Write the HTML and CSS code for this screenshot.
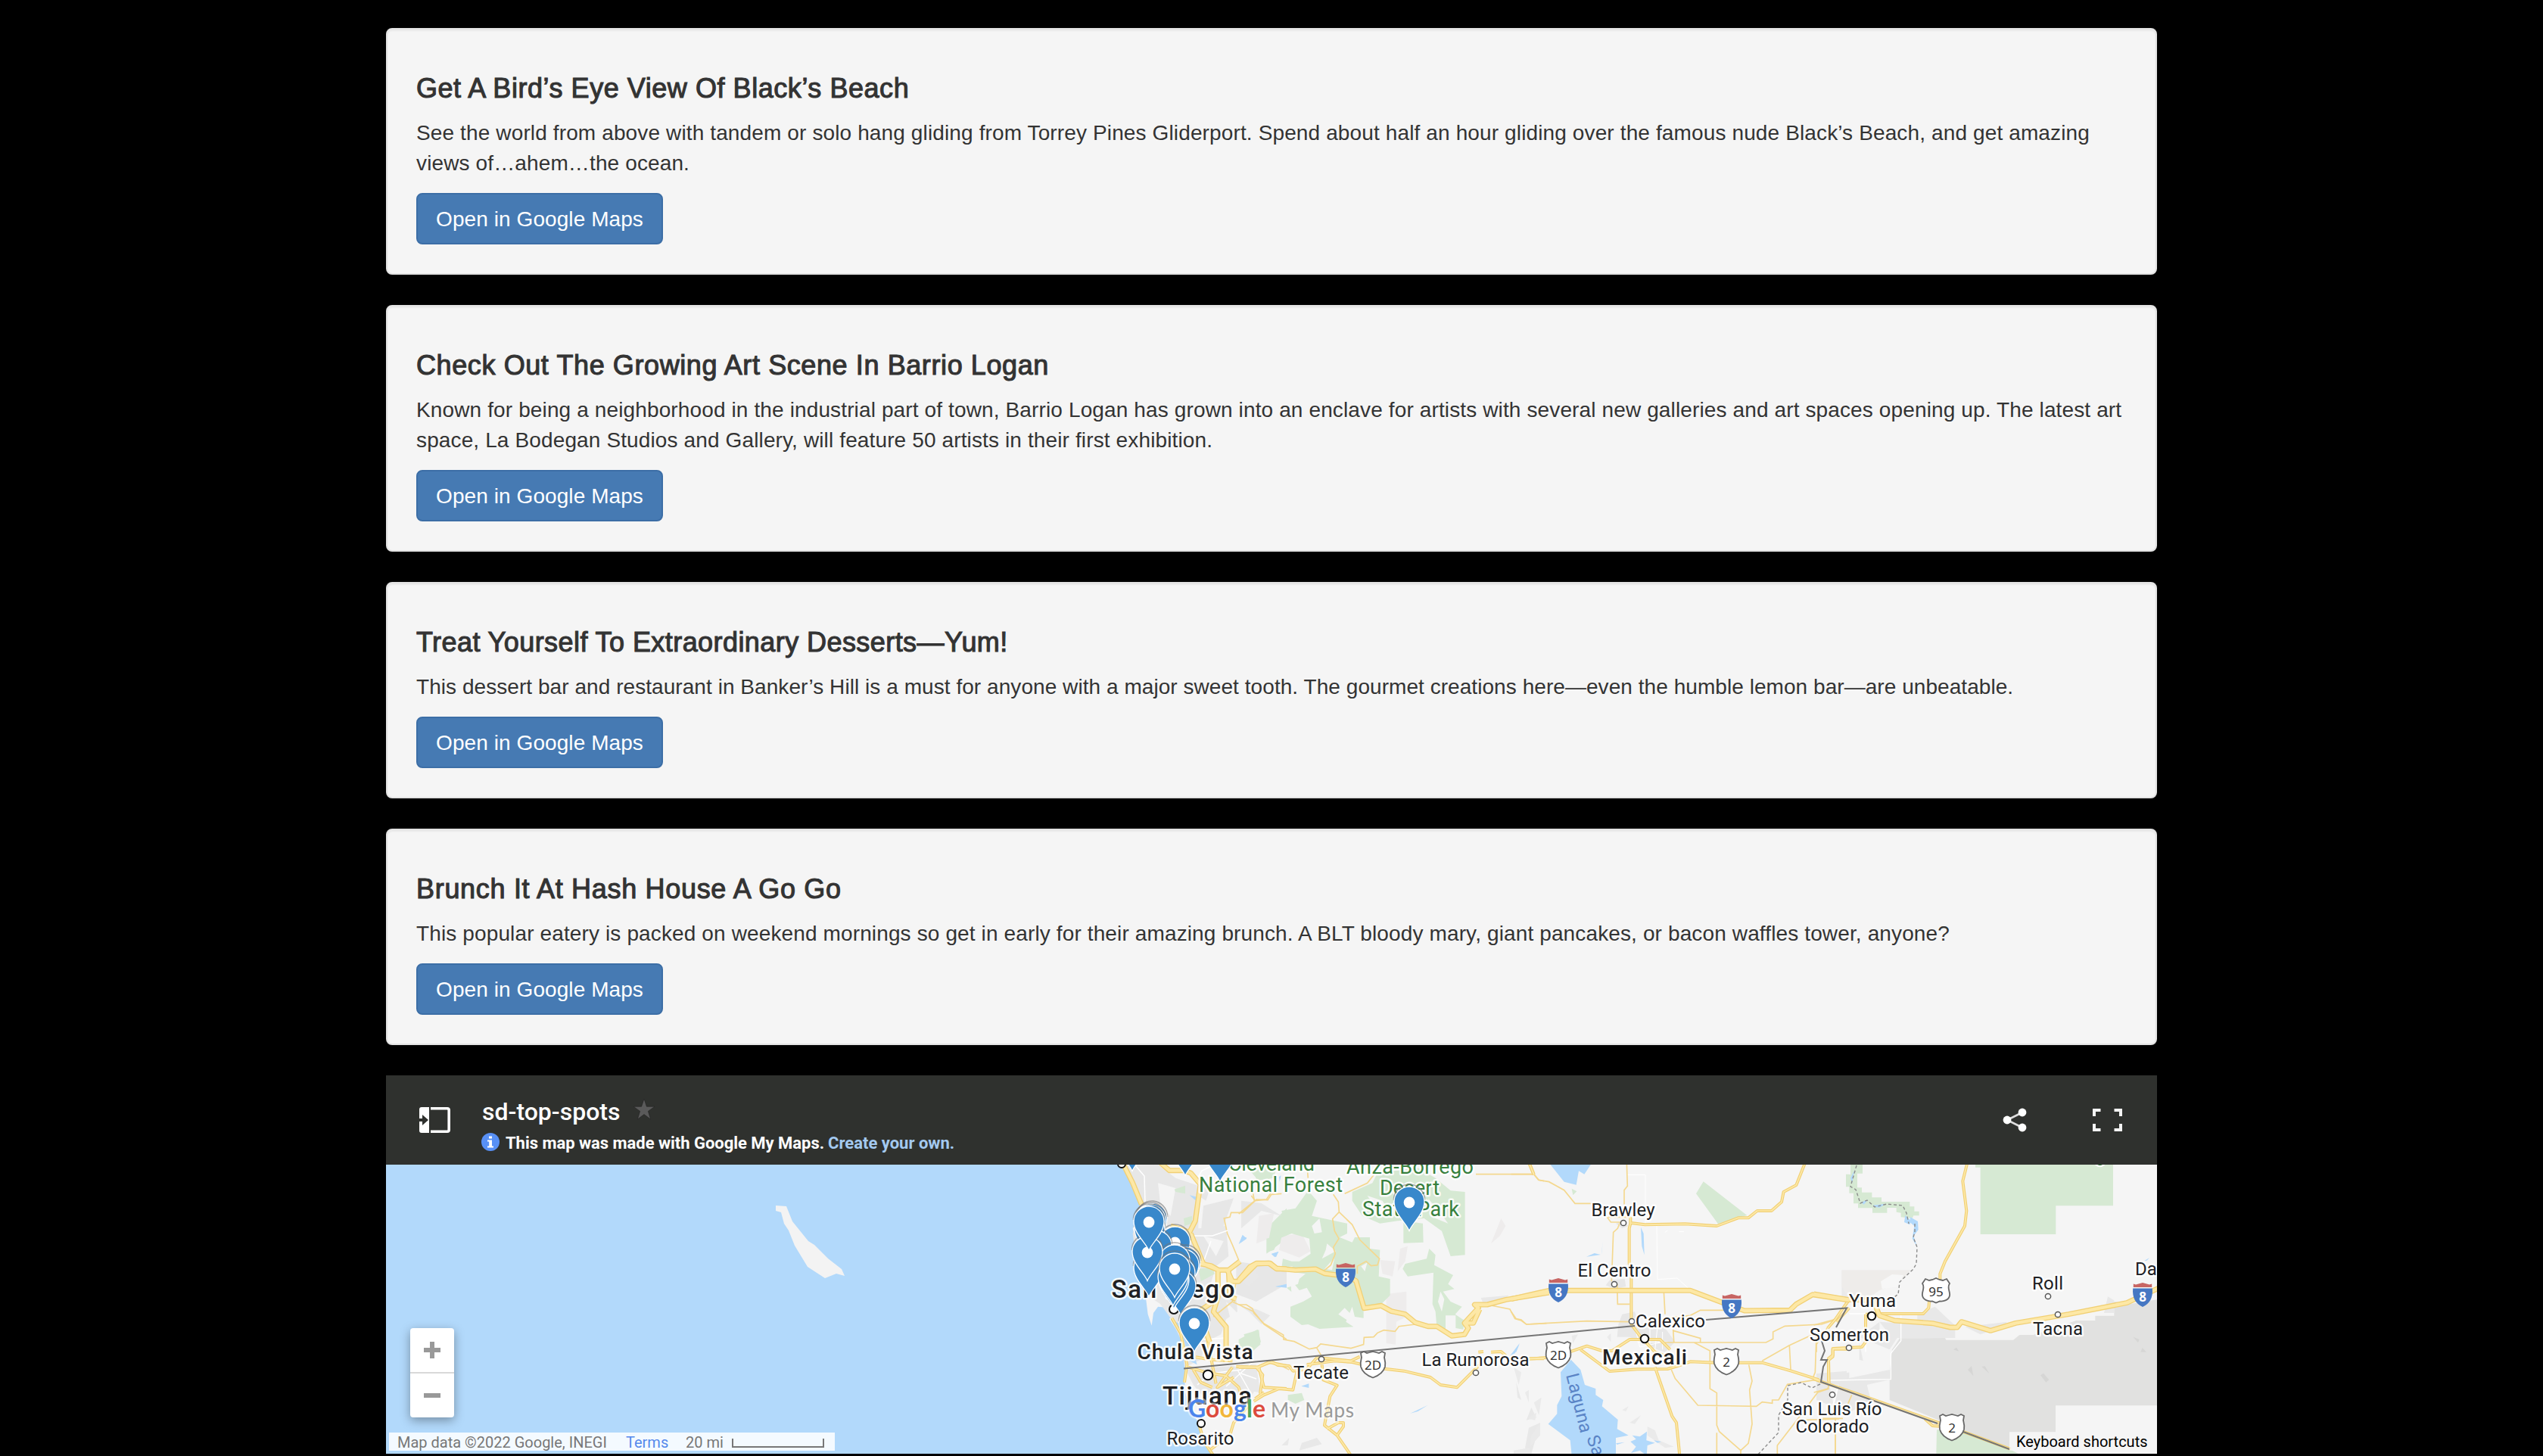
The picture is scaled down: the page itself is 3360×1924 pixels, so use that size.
FILE: index.html
```html
<!DOCTYPE html>
<html lang="en">
<head>
<meta charset="utf-8">
<title>San Diego Top Spots</title>
<link rel="stylesheet" href="styles.css">
</head>
<body>
<main class="container">
  <article class="well">
    <h4 class="well-title t1">Get A Bird’s Eye View Of Black’s Beach</h4>
    <p class="well-text d1">See the world from above with tandem or solo hang gliding from Torrey Pines Gliderport. Spend about half an hour gliding over the famous nude Black’s Beach, and get amazing<br>views of…ahem…the ocean.</p>
    <a class="btn">Open in Google Maps</a>
  </article>
  <article class="well">
    <h4 class="well-title t2">Check Out The Growing Art Scene In Barrio Logan</h4>
    <p class="well-text d2">Known for being a neighborhood in the industrial part of town, Barrio Logan has grown into an enclave for artists with several new galleries and art spaces opening up. The latest art<br>space, La Bodegan Studios and Gallery, will feature 50 artists in their first exhibition.</p>
    <a class="btn">Open in Google Maps</a>
  </article>
  <article class="well">
    <h4 class="well-title t3">Treat Yourself To Extraordinary Desserts—Yum!</h4>
    <p class="well-text d3">This dessert bar and restaurant in Banker’s Hill is a must for anyone with a major sweet tooth. The gourmet creations here—even the humble lemon bar—are unbeatable.</p>
    <a class="btn">Open in Google Maps</a>
  </article>
  <article class="well">
    <h4 class="well-title t4">Brunch It At Hash House A Go Go</h4>
    <p class="well-text d4">This popular eatery is packed on weekend mornings so get in early for their amazing brunch. A BLT bloody mary, giant pancakes, or bacon waffles tower, anyone?</p>
    <a class="btn">Open in Google Maps</a>
  </article>

  <section class="mymap">
    <header class="map-header">
      <svg class="icon-panel" width="42" height="34" viewBox="0 0 42 34">
        <path fill="#fff" d="M3 0H13V34H3Q0 34 0 31V19H4V24L12 17L4 10V15H0V3Q0 0 3 0Z"/>
        <path fill="none" stroke="#fff" stroke-width="3.6" d="M15 1.8H37Q39.2 1.8 39.2 4V30Q39.2 32.2 37 32.2H15"/>
      </svg>
      <div class="map-heading">
        <div class="map-title-row">
          <span class="map-title">sd-top-spots</span>
          <svg class="icon-star" width="30" height="30" viewBox="0 0 30 30"><path fill="#5a5a5a" stroke="#222" stroke-width=".6" d="M15 1L18.4 11.2H29L20.4 17.4L23.6 28L15 21.6L6.4 28L9.6 17.4L1 11.2H11.6Z"/></svg>
        </div>
        <div class="map-sub">
          <svg width="24" height="24" viewBox="0 0 24 24"><circle cx="12" cy="12" r="12" fill="#5890f5"/><path fill="#fff" d="M10 4.5H14V7.5H10ZM8 9.5H14V17.500H16V19.500H8V17.500H10.200V11.500H8Z"/></svg>
          <span class="made">This map was made with Google My Maps.</span>
          <span class="create">Create your own.</span>
        </div>
      </div>
      <svg class="icon-share" width="32" height="32" viewBox="0 0 32 32" fill="#fff"><path d="M26 6L6 16L26 26" fill="none" stroke="#ddd" stroke-width="2.600"/><circle cx="6" cy="16" r="5.400"/><circle cx="26" cy="6" r="5.400"/><circle cx="26" cy="26" r="5.400"/></svg>
      <svg class="icon-full" width="39" height="30" viewBox="0 0 39 30"><path fill="none" stroke="#f4f4f4" stroke-width="4" d="M10.500 2H2V10M28.500 2H37V10M2 20V28H10.500M37 20V28H28.500"/></svg>
    </header>

    <div class="map-view">
      <svg class="map" width="2340" height="382" viewBox="510 1539 2340 382">
        <defs>
          <g id="freeways">
            <g transform="translate(1300 1520) scale(.33333)">
              <path d="M700 50L735 80H790L820 90L858 135L838 280L815 325L740 300M820 330L870 450L930 475H970L1015 440M860 450L900 458L930 475H965L985 520H1010L1080 450L1130 448L1160 470H1200M928 480V580L910 640L960 700V840M970 480L975 580L1000 590M925 590L850 640L870 690L895 760M550 50L590 130L625 215"/>
            </g>
            <g transform="translate(1640 1520) scale(.33333)">
              <path d="M-10 515L35 462L60 448H115L140 468L215 475L295 471L330 488L375 494L410 490L455 518L487 626L555 616L595 638L650 650L690 683L740 698H775L835 736L885 730L900 705L885 685L940 625L925 612H975L1050 592L1220 564M885 685H920L945 630"/>
            </g>
            <g transform="translate(2000 1520) scale(.33333)">
              <path d="M-10 590L140 556H700L825 603L915 636L1095 634L1120 610L1185 572L1330 594"/>
            </g>
            <g transform="translate(2400 1400) scale(.33333)">
              <path d="M-10 930L125 952L225 955L250 1015L310 1035L460 1046L530 1062H558L575 1040L690 1075L790 1045L1000 1010L1230 965L1360 905"/>
            </g>
          </g>
          <g id="highways">
            <g transform="translate(1300 1520) scale(.33333)">
              <path d="M745 665L780 725L805 850L795 920M810 860L880 880L960 895L1010 940L1025 985M840 820L900 830L985 835M985 860L925 940L990 900M880 720L920 925M830 870L860 920L905 940M1000 858L1090 860L1110 940L1200 945M1090 858L1130 840L1200 855M1050 1010L990 1080L975 1130L900 1185M850 1080L875 1160L910 1210M1075 985L1110 960"/>
            </g>
            <g transform="translate(1640 1520) scale(.33333)">
              <path d="M-10 860H65L120 838L145 852L190 855L205 875L260 868L300 822L435 835L470 818M260 850L370 835L440 840L530 862L645 875L750 900L790 930L855 940L905 890L945 850M60 860L85 890L75 965M50 995L90 970L150 945L205 950L220 880M320 850L325 910L380 932L352 975L330 1090L380 1130L435 1210M340 1105L385 1080L405 1080V1095L380 1130M1140 50L1160 95M940 800L960 798M990 800L1030 798L1050 815M1140 826H1200"/>
            </g>
            <g transform="translate(2000 1520) scale(.33333)">
              <path d="M62 50L80 97M463 265V290L458 310V450L466 480V690L500 735L560 800L640 830M465 288L520 295L680 292L805 300L890 268H930L965 240H1022L1062 205L1070 165L1120 138L1155 50M60 827L130 822M220 800L290 776L350 795H390L460 750H580L620 790M265 790L380 876L490 868L610 867L650 855L700 838L800 842H985L1100 875L1210 910M560 860L628 1055L645 1080L658 1210M1330 625L1280 680M1330 788H1265V818L1248 832L1250 925"/>
            </g>
            <g transform="translate(2400 1400) scale(.33333)">
              <path d="M598 410L580 482L595 600L588 660L510 800L490 850V875M447 960L445 985L423 1008H250M195 1010H240M195 1010V1120L180 1140L65 1146V1172L48 1185V1275M-10 1267L160 1325M120 965L75 1030L45 1065M430 1425L460 1452L490 1454M160 1325L490 1442L770 1545"/>
            </g>
          </g>
          <g id="shield-i">
            <path fill="#4577c3" d="M-12.800 7.500H12.800C14 20 9 28 0 32C-9 28-14 20-12.800 7.500Z"/>
            <path fill="#c76563" d="M-12.200 6V1.500L-9 2.500L-4.500 1.300L0 0L4.500 1.300L9 2.500L12.200 1.500V6Z"/>
            <text class="shield-num inv" y="24.500">8</text>
          </g>
          <path id="shield-mx" class="shield" d="M-16 3L-12 1L-8 3L-4 2L0 1L4 2L8 3L12 1L16 3L15 9C16 13 17 16 16 21C14 28 7 33 0 35.500C-7 33-14 28-16 21C-17 16-16 13-15 9Z"/>
          <path id="shield-us" class="shield" d="M-14 1L-9 3L-4.500 2L0 0L4.500 2L9 3L14 1L18 7C14 13 19 17 18 23C17 29 10 31 5 30.500L0 32.500L-5 30.500C-10 31-17 29-18 23C-19 17-14 13-18 7Z"/>
          <g id="pin">
            <path fill="none" stroke="#777" stroke-opacity=".6" stroke-width="1.600" d="M-20.500-3A20.500 21 0 0 1 20.500-3"/>
            <path fill="#3888cb" stroke="#fff" stroke-width="1.300" d="M0 37.500C-4 27-20 15-20-1A20 20 0 0 1 20-1C20 15 4 27 0 37.500Z"/>
            <circle r="7.400" fill="#fff"/>
          </g>
        </defs>

        <rect x="510" y="1539" width="2340" height="382" fill="#b2d9fb"/>
        <path fill="#f3f3f3" d="M1025 1593L1039 1594L1047 1614L1068 1640L1076 1645L1094 1663L1112 1677L1116 1686L1105 1683L1090 1689L1067 1674L1050 1646L1042 1626L1036 1617L1032 1602L1025 1600Z"/>

        <!-- land -->
        <g transform="translate(1300 1520) scale(.33333)">
          <path fill="#f5f5f5" d="M540 50L585 120L605 175L622 235L590 310L610 400L600 480L640 570L650 650L665 695L672 645L690 620L740 625L760 650L735 668L775 730L790 790L800 860L795 950L820 1030L850 1080L862 1120L880 1170L905 1210H4700V50Z"/>
          <path fill="#e7e7e7" d="M560 60L690 57L760 110L850 140V310L960 300L970 420L920 460L890 560L1000 580L1005 640L960 670L940 730L880 760L860 830L795 860L785 760L740 665L700 610L640 570L610 480L590 330L625 240L600 160ZM870 220L990 190L950 300L860 330ZM800 870L990 855L1090 910L1060 980L920 950L880 990L830 930ZM1000 440L1200 470V530L1080 600L1000 570ZM850 100L900 140L880 200L850 180Z"/>
          <path fill="#f5f5f5" d="M690 130L760 150L740 260L700 220ZM870 340L950 360L920 420ZM960 600L1010 650L980 680Z"/>
          <path fill="#b2d9fb" d="M740 670L780 690L830 800L845 850L815 835L795 760ZM1025 335L1042 350L1010 372ZM1140 410L1168 402L1158 424ZM815 178L845 185L838 198ZM1155 540L1200 530V545Z"/>
          <path fill="#d6e9d3" d="M755 155L798 140V172L760 165ZM792 270L825 260V290L795 300ZM1130 300L1200 230V350L1120 410ZM1010 750L1085 710L1098 760L1060 805L1010 780ZM850 470L905 465L915 490L860 520ZM1070 60L1160 60L1150 110L1080 120Z"/>
        </g>
        <g transform="translate(1640 1520) scale(.33333)">
          <path fill="#eeecec" d="M160 340L240 330L275 400L230 425L150 395ZM70 260L130 250L110 350L60 370ZM550 435L610 440L600 500L560 490ZM575 570L655 560V660L615 680L612 770L575 765ZM990 370L1030 270L1048 300L1025 340ZM630 390L660 380L650 440L620 480Z"/>
          <path fill="#e8e8e8" d="M0 200L80 210L160 260L80 240L0 310ZM0 480L45 460L70 500L30 540L0 520ZM0 620L60 630L115 655L80 690L30 640ZM0 850H60L75 960L0 950ZM950 585L1060 575L1030 600L960 610ZM1090 920L1110 990L1095 980ZM1150 1020L1170 1060L1130 1070ZM1140 1100L1185 1080L1150 1203L1125 1180ZM240 1160L300 1140L320 1165L230 1190ZM160 1170L190 1140L185 1170Z"/>
          <path fill="#d6e9d3" d="M160 240L215 230L265 160L300 200L280 260L420 290V330L390 345L440 365L450 345H510V390L550 395L545 500L590 510V575L550 615L485 625V665L450 660L440 620L415 680L445 700L310 708L265 690L240 693L195 660V620L245 600L180 545L225 530L230 510L255 490L180 480L205 460L160 465L165 430L200 440L230 440L275 410L270 350L200 330L150 350L130 395L100 405V350L145 340L150 300L170 280ZM440 165L520 130L540 90L700 70L770 110L830 160L887 165V415L830 420L795 320L725 270L620 280L550 290L480 260L440 200ZM643 280L720 290L722 365L643 368ZM650 450L735 430L745 390L770 415L765 455L840 495L820 530L845 550L800 560L830 600L875 620L848 650L885 675L880 710L850 705V655L810 655V710L775 700L770 640L758 610L762 485L660 500L640 470ZM185 970L240 962L250 990L215 1005L185 990ZM10 730L70 712L76 770L40 800ZM25 70L120 60L110 120L60 110Z"/>
          <path fill="#f5f5f5" d="M280 300L310 270L320 325L290 330ZM340 370L375 400L320 430L335 395ZM195 510L230 555L260 545L280 580L245 600L200 575ZM385 650L410 625L445 660L430 680ZM500 180L560 200L600 270L540 240ZM740 190L790 250L820 290L770 270ZM475 460L500 445L490 480ZM790 560L805 590L795 640L780 600ZM370 425L330 470L360 475Z"/>
          <path fill="#b2d9fb" d="M120 412L148 402L133 424ZM135 542L178 532L160 540ZM0 345L22 345L0 365ZM238 935L268 925V942ZM1065 815L1104 764L1085 805ZM670 1043L740 1010L700 1035ZM150 105L158 100L152 125Z"/>
        </g>
        <g transform="translate(2000 1520) scale(.33333)">
          <path fill="#e7e7e7" d="M380 515L440 510L445 540L400 550L365 535ZM405 290L430 280L455 300L430 310ZM430 650L480 640L500 700L590 690L640 760L600 800L540 780L460 740L410 740L415 690ZM1215 930L1250 905L1330 880V1000L1220 990Z"/>
          <path fill="#eaeaea" d="M230 735L255 730L235 765ZM45 960L60 950L60 1000ZM80 1000L110 980L100 1050ZM60 1060L90 1040L85 1070L60 1065ZM70 1130L105 1080V1130L65 1175ZM0 1190L60 1180L70 1203H0ZM430 1030L455 1015L445 1035ZM460 1080L505 1050L480 1085ZM530 1095L560 1110L575 1150L635 1175L600 1180L530 1130ZM370 740L385 725L385 760ZM1300 477H1330V600H1300ZM0 860L30 880L20 930Z"/>
          <path fill="#d6e9d3" d="M752 124L925 258L890 268L810 292L723 172ZM230 152L250 163L235 178ZM1317 95H1330V145H1317Z"/>
          <path fill="#b2d9fb" d="M140 50L200 125L248 137L258 82L280 95L310 50ZM227 830L265 870L282 930L325 945V970L355 990L350 1015L413 1068L410 1105L455 1130L405 1140V1210H230L224 1150L137 1085L172 1045V1010L190 975L186 880ZM288 422L320 408L345 414ZM348 414L353 360L350 400ZM504 305L515 330L518 415L508 380ZM0 800L23 768L10 800ZM405 1162L440 1157L410 1167ZM463 1155L485 1145L470 1130L500 1135L528 1115L526 1150L560 1160L530 1170L527 1210L500 1190L465 1200L485 1175ZM555 1150L585 1155L570 1160Z"/>
          <path fill="none" stroke="#fff" stroke-width="3" d="M450 97H522V292M567 292L570 512L648 507L690 545M480 700L500 780L590 760M540 700V780M570 700L560 790M590 720V790M490 760H610M600 325L610 318M655 322H675"/>
        </g>
        <g transform="translate(2400 1400) scale(.33333)">
          <path fill="#eeecea" d="M100 835H375L325 890L250 915L200 950L130 950L100 900Z"/>
          <path fill="#f7f7f7" d="M255 880L300 852L345 855L325 900L260 910Z"/>
          <path fill="#e1e1e0" d="M1360 950V1372H948V1478H765V1545L290 1350V1240L300 1150L330 1105L510 1104L514 1112H780L805 1092H860L1030 1035H1105V1016H1180V960L1240 970Z"/>
          <path fill="#e8e8e8" d="M400 1010L470 980L550 1055V1104H300L250 1040L400 1050ZM170 1100L250 1040V1080L385 1090L320 1104L290 1150ZM0 1245L120 1235V1265L290 1230V1270L200 1290L215 1350L130 1400L0 1350ZM590 1060L755 1040L740 1060L650 1090ZM170 1120L185 1195L170 1190ZM1155 940L1180 955V1005H1140Z"/>
          <path fill="#f5f5f5" d="M215 1293H288V1348L216 1330ZM50 1285L90 1290L70 1380Z"/>
          <path fill="#d6d6d5" d="M600 1230L615 1215L622 1255ZM655 1218L668 1216L685 1245ZM888 1252L900 1244L922 1270L910 1280ZM543 1150L555 1142L565 1157ZM1255 1100L1280 1110L1275 1123ZM1285 1160L1292 1143L1308 1160Z"/>
          <path fill="#d6e9d3" d="M630 410H1176V580H949V693H650V428H630ZM477 1468L600 1478L765 1545L800 1562H475ZM135 410H183V452H162V508H180V527H220V547H258V564H370V583H388V602H407V619H385L380 630L335 625V608L317 605V588H280V608H222V589H165V571H147V530H130V502H117V456H135Z"/>
          <path fill="#b2d9fb" d="M178 566L205 555L188 575ZM225 578L275 572L250 587L232 585ZM352 618L375 640L370 655L348 645ZM372 625L402 642L404 675L385 700L400 745L380 710L388 660L370 645ZM135 470L150 440L142 490ZM1300 798L1320 786L1310 797Z"/>
          <circle cx="1124" cy="403" r="24" fill="#fff"/><circle cx="1124" cy="403" r="17" fill="#2b7f35"/>
          <path fill="none" stroke="#fff" stroke-width="4" d="M130 1008H335V1115L295 1165V1268L50 1272M195 1120V1160M85 1300L65 1370"/>
        </g>

        <!-- local roads -->
        <g class="minor">
          <path transform="translate(1300 1520) scale(.33333)" d="M1060 180L1075 200L1025 247H980L975 265L952 270L965 330L985 375L1010 435M1075 200L1120 195L1140 165M985 600L1070 640L1110 690L1200 750M910 660L985 600L1000 520"/>
          <path transform="translate(1640 1520) scale(.33333)" d="M-10 252L60 195L105 197L120 175M45 160L52 200M120 175L160 172M260 50L265 110M410 172L500 130L525 98M930 95H1160L1180 118L1200 122M365 175L385 205L388 245L362 272L370 320L387 350L365 385L373 410L355 455L325 480M388 245L440 295L470 355L548 430L540 455L515 458L495 440L460 460V490M-10 612H20L45 628L50 645L90 687L167 732L168 750L210 758L270 788L300 782L315 768L435 785L485 770L487 742L525 740L540 724L565 713L610 718L625 698L690 690M300 785L318 815M150 850L190 870M975 612L1065 630L1085 668L1110 675L1130 690L1210 686"/>
          <path transform="translate(2000 1520) scale(.33333)" d="M-10 95H80L98 118L140 125L200 158L243 211H330M448 50L451 142L438 158V215M370 265L385 285H425M420 290L412 310L395 325L388 520M375 265H465M410 530L412 610H460M-10 640L10 668L30 672L50 690L290 677L455 680M595 560L600 650M600 665L700 655L740 634H840M632 710L635 760M632 715L740 745V760M600 762H1000L1028 748V720L1075 697L1220 690L1280 670L1310 620M985 835L1090 775L1175 735L1260 715M1093 775L1098 870M1200 730L1195 880L1185 905M715 762L778 795V945L805 962V1090L815 1115L900 1190L930 1162L945 1085L935 950L945 915L932 850M805 1210V1120M625 870L640 905L730 1011L962 1015L985 998L1025 1003V990L1050 990L1085 928L1210 908M900 1190V1210M1045 1210V1170L1130 1060L1205 960L1250 945M1130 1070L1290 1065M1275 1065V1210"/>
          <path transform="translate(2400 1400) scale(.33333)" d="M-10 1053L75 1030L130 960M45 1060L0 1130V1160M-10 1320L45 1305L50 1290M140 1330L125 1365M25 1423H105M75 1420V1560"/>
        </g>
        <path class="street" d="M1500 1540L1512 1554L1513 1589M1579 1562L1588 1547L1603 1540M1566 1633H1602L1622 1626M1582 1830L1600 1815L1640 1810M1620 1832L1655 1800M1635 1810L1652 1840M1600 1640L1590 1668M1590 1770L1618 1768M1640 1815L1660 1822"/>

        <use href="#highways" class="hw-case"/><use href="#highways" class="hw-fill"/>
        <use href="#freeways" class="fw-case"/><use href="#freeways" class="fw-fill"/>

        <!-- borders -->
        <path class="border" d="M1564 1808.500L2160 1752M2254 1744L2440 1728.500L2426 1754M2407 1772L2411 1785L2406 1797H2414L2409 1806L2406 1826L2560 1881M2594 1892L2655 1915"/>
        <path class="state" d="M2453 1540L2445 1568L2452 1572L2458 1590L2467 1586L2477 1595L2493 1591L2514 1593L2519 1603L2522 1617M2530 1617V1628L2528 1635L2533 1648L2532 1670L2528 1677L2510 1694L2508 1710L2503 1714M2405 1829L2394 1834L2380 1827L2362 1831V1850L2350 1870V1893L2320 1925"/>

        <!-- places -->
        <g class="dots">
          <circle cx="1482" cy="1538" r="5"/><circle cx="1551" cy="1730" r="6"/><circle cx="1596" cy="1817" r="6.300"/><circle cx="1587" cy="1881" r="5"/><circle cx="2173" cy="1769" r="5.300"/><circle cx="2473" cy="1739" r="5.300"/>
        </g>
        <g class="dots small">
          <circle cx="1746" cy="1796" r="3.600"/><circle cx="1950" cy="1814" r="3.600"/><circle cx="2145" cy="1616" r="3.600"/><circle cx="2133" cy="1697" r="3.600"/><circle cx="2156" cy="1746" r="3.600"/><circle cx="2443" cy="1781" r="3.600"/><circle cx="2706" cy="1713" r="3.600"/><circle cx="2719" cy="1737" r="3.600"/><circle cx="2421" cy="1843" r="3.600"/>
        </g>
        <g class="label park">
          <text x="1623" y="1547" textLength="114">Cleveland</text>
          <text x="1584" y="1574.500" textLength="190">National Forest</text>
          <text x="1779" y="1551" textLength="168">Anza-Borrego</text>
          <text x="1823" y="1579" textLength="79">Desert</text>
          <text x="1800" y="1607" textLength="128">State Park</text>
        </g>
        <g class="label">
          <text class="city xl" x="1468.500" y="1715" textLength="163">San Diego</text>
          <text class="city" x="1502.500" y="1796" textLength="153">Chula Vista</text>
          <text class="city xl" x="1536" y="1856" textLength="118">Tijuana</text>
          <text x="1541.500" y="1909" textLength="89">Rosarito</text>
          <text x="1709" y="1822" textLength="73">Tecate</text>
          <text x="1878.500" y="1804.500" textLength="142">La Rumorosa</text>
          <text x="2102.500" y="1606.500" textLength="84">Brawley</text>
          <text x="2084.500" y="1687" textLength="97">El Centro</text>
          <text x="2161" y="1754" textLength="92">Calexico</text>
          <text class="city" x="2117" y="1802.500" textLength="112">Mexicali</text>
          <text x="2443" y="1727" textLength="62">Yuma</text>
          <text x="2391" y="1771.500" textLength="105">Somerton</text>
          <text x="2685" y="1704" textLength="41">Roll</text>
          <text x="2686" y="1763.500" textLength="66">Tacna</text>
          <text x="2821" y="1685">Da</text>
          <text x="2354.500" y="1869.500" textLength="132">San Luis Río</text>
          <text x="2372.500" y="1893" textLength="97">Colorado</text>
        </g>
        <text class="water" transform="translate(2069 1817) rotate(76)">Laguna</text>
        <text class="water" transform="translate(2096 1900) rotate(70)">Sal</text>

        <g class="shields">
          <use href="#shield-i" x="1778" y="1669"/><use href="#shield-i" x="2059" y="1689"/><use href="#shield-i" x="2288" y="1710"/><use href="#shield-i" x="2831" y="1695"/>
          <use href="#shield-mx" x="1814" y="1785"/><text class="shield-num" x="1814" y="1810">2D</text>
          <use href="#shield-mx" x="2059" y="1772"/><text class="shield-num" x="2059" y="1797">2D</text>
          <use href="#shield-mx" x="2281" y="1781"/><text class="shield-num" x="2281" y="1806">2</text>
          <use href="#shield-mx" x="2579" y="1868"/><text class="shield-num" x="2579" y="1893">2</text>
          <use href="#shield-us" x="2558" y="1689"/><text class="shield-num" x="2558" y="1712.500">95</text>
        </g>

        <!-- markers -->
        <g>
          <use href="#pin" x="1496" y="1510"/><use href="#pin" x="1566" y="1516"/><use href="#pin" x="1612" y="1524"/>
          <use href="#pin" x="1552.500" y="1642"/><use href="#pin" x="1566" y="1669"/><use href="#pin" x="1564" y="1672"/>
          <use href="#pin" x="1522" y="1611"/><use href="#pin" x="1520" y="1613"/><use href="#pin" x="1519" y="1625"/>
          <use href="#pin" x="1528" y="1647"/><use href="#pin" x="1552" y="1666"/><use href="#pin" x="1559" y="1683"/>
          <use href="#pin" x="1518" y="1676"/><use href="#pin" x="1516" y="1655"/><use href="#pin" x="1518" y="1615"/>
          <use href="#pin" x="1560" y="1700"/><use href="#pin" x="1551" y="1692"/><use href="#pin" x="1550" y="1688"/><use href="#pin" x="1552" y="1677"/>
          <use href="#pin" x="1578" y="1749"/><use href="#pin" x="1862" y="1589"/>
        </g>

        <g class="brand">
          <text class="google" x="1570" y="1873" textLength="102"><tspan fill="#4b84ec">G</tspan><tspan fill="#dc4b3e">o</tspan><tspan fill="#f2b63a">o</tspan><tspan fill="#4b84ec">g</tspan><tspan fill="#4ea65b">l</tspan><tspan fill="#dc4b3e">e</tspan></text>
          <text class="mymaps" x="1679" y="1873" textLength="110">My Maps</text>
        </g>
      </svg>

      <div class="zoom"><span class="zoom-btn"><i class="bar"></i><i class="bar vert"></i></span><span class="zoom-btn"><i class="bar"></i></span></div>
      <div class="attribution"><span class="copy">Map data ©2022 Google, INEGI</span><span class="terms">Terms</span><span class="miles">20 mi</span><i class="scale"></i></div>
      <div class="shortcuts">Keyboard shortcuts</div>
    </div>
  </section>
</main>
</body>
</html>
```
FILE: styles.css
```css
* { box-sizing: border-box; }

body {
  margin: 0;
  background: #000;
  color: #333;
  font: 28px/40px "Liberation Sans", Arial, sans-serif;
  overflow: hidden;
}

.container {
  width: 2340px;
  height: 1924px;
  margin: 0 auto;
  padding-top: 37px;
}

.well {
  margin-bottom: 40px;
  padding: 38px;
  background: #f5f5f5;
  border: 2px solid #e3e3e3;
  border-radius: 8px;
  box-shadow: inset 0 2px 2px rgba(0, 0, 0, .05);
}

.well-title {
  margin: 21px 0 20px;
  font-size: 36px;
  line-height: 38px;
  font-weight: 400;
  -webkit-text-stroke: 1.1px #333;
  white-space: nowrap;
}

.well-text { margin: 0 0 19px; white-space: nowrap; }

.t1 { letter-spacing: .55px; }
.t2 { letter-spacing: .6px; }
.t3 { letter-spacing: .43px; }
.t4 { letter-spacing: .69px; }
.d1, .d2, .d4 { letter-spacing: .128px; }
.d3 { letter-spacing: .055px; }

.btn {
  display: block;
  width: 326px;
  height: 68px;
  border: 2px solid #3c6ea6;
  border-radius: 8px;
  background: #467ab3;
  color: #fff;
  letter-spacing: .08px;
  line-height: 65px;
  text-align: center;
}

.mymap { display: flex; flex-direction: column; height: 500px; font-family: Roboto, sans-serif; }

.map-header {
  display: flex;
  height: 118px;
  padding: 0 46px 0 44px;
  background: #2f312e;
}

.icon-panel { margin-top: 42px; }
.map-heading { margin: 27px auto 0 41px; }
.map-title-row { display: flex; height: 42px; gap: 17px; }
.map-title { color: #fff; font-size: 32px; line-height: 43px; font-weight: 500; }
.icon-star { margin-top: 3px; }
.map-sub { display: flex; height: 24px; margin: 7px 0 0 -1px; font-size: 22px; line-height: 27px; font-weight: 700; color: #fff; }
.made { margin-left: 8px; letter-spacing: -.03px; }
.create { margin-left: 5px; color: #a3c9f0; }
.icon-share { margin-top: 43px; }
.icon-full { margin: 44px 0 0 87px; }

.map-view { position: relative; height: 382px; overflow: hidden; }
.map { display: block; }

.minor { fill: none; stroke: #f4d88f; stroke-width: 5; }
.street { fill: none; stroke: #fff; stroke-width: 1.5; }
.hw-case, .hw-fill, .fw-case, .fw-fill { fill: none; stroke-linejoin: round; }
.hw-case { stroke: #f1d075; stroke-width: 12; }
.hw-fill { stroke: #fde9a9; stroke-width: 5; }
.fw-case { stroke: #f1d075; stroke-width: 21; }
.fw-fill { stroke: #fde8a6; stroke-width: 13; }
.border { fill: none; stroke: #757575; stroke-width: 2; }
.state { fill: none; stroke: #8c8c8c; stroke-width: 1.4; stroke-dasharray: 4 3; }
.dots { fill: #fff; stroke: #111; stroke-width: 2; }
.dots.small { stroke: #555; stroke-width: 1.5; }
.label { font-size: 24px; fill: #202124; stroke: #fff; stroke-opacity: .85; stroke-width: 5; stroke-linejoin: round; paint-order: stroke; }
.label .city { font-size: 28px; font-weight: 500; }
.label .xl { font-size: 33px; }
.label.park { font-size: 27px; fill: #37803d; }
.water { font-size: 24px; fill: #5a84c6; letter-spacing: .2px; }
.shield { fill: #fff; stroke: #686868; stroke-width: 1.8; }
.shield-num { font: 17px "Noto Sans", sans-serif; text-anchor: middle; fill: #333; }
.shield-num.inv { font-weight: 700; fill: #fff; }
.brand { font-family: Lato, sans-serif; paint-order: stroke; stroke: #fff; stroke-opacity: .5; stroke-width: 5; }
.google { font-size: 32px; font-weight: 700; }
.mymaps { font-size: 26px; fill: #999; }

.zoom {
  position: absolute;
  left: 32px;
  top: 216px;
  width: 58px;
  height: 118px;
  border-radius: 4px;
  background: #fff;
  box-shadow: 0 4px 14px rgba(0, 0, 0, .35);
}

.zoom-btn { display: grid; place-items: center; height: 58px; }
.zoom-btn + .zoom-btn { height: 60px; border-top: 2px solid #d9d9d9; }
.bar { grid-area: 1 / 1; width: 22px; height: 6px; background: #999; }
.bar.vert { width: 6px; height: 22px; }

.attribution {
  position: absolute;
  left: 4px;
  top: 354px;
  display: flex;
  width: 589px;
  height: 24px;
  padding-left: 11px;
  background: rgba(255, 255, 255, .85);
  color: #777;
  font-size: 20px;
  line-height: 26px;
  white-space: nowrap;
}

.copy { width: 302px; }
.terms { width: 79px; color: #5489ec; }
.miles { width: 61px; }
.scale { width: 122px; height: 12px; margin-top: 8px; border: 2px solid #777; border-top: 0; }

.shortcuts {
  position: absolute;
  right: 0;
  top: 353px;
  width: 195px;
  height: 25px;
  padding-left: 9px;
  background: rgba(245, 245, 245, .7);
  color: #000;
  font-size: 20px;
  line-height: 27px;
  white-space: nowrap;
}
```
